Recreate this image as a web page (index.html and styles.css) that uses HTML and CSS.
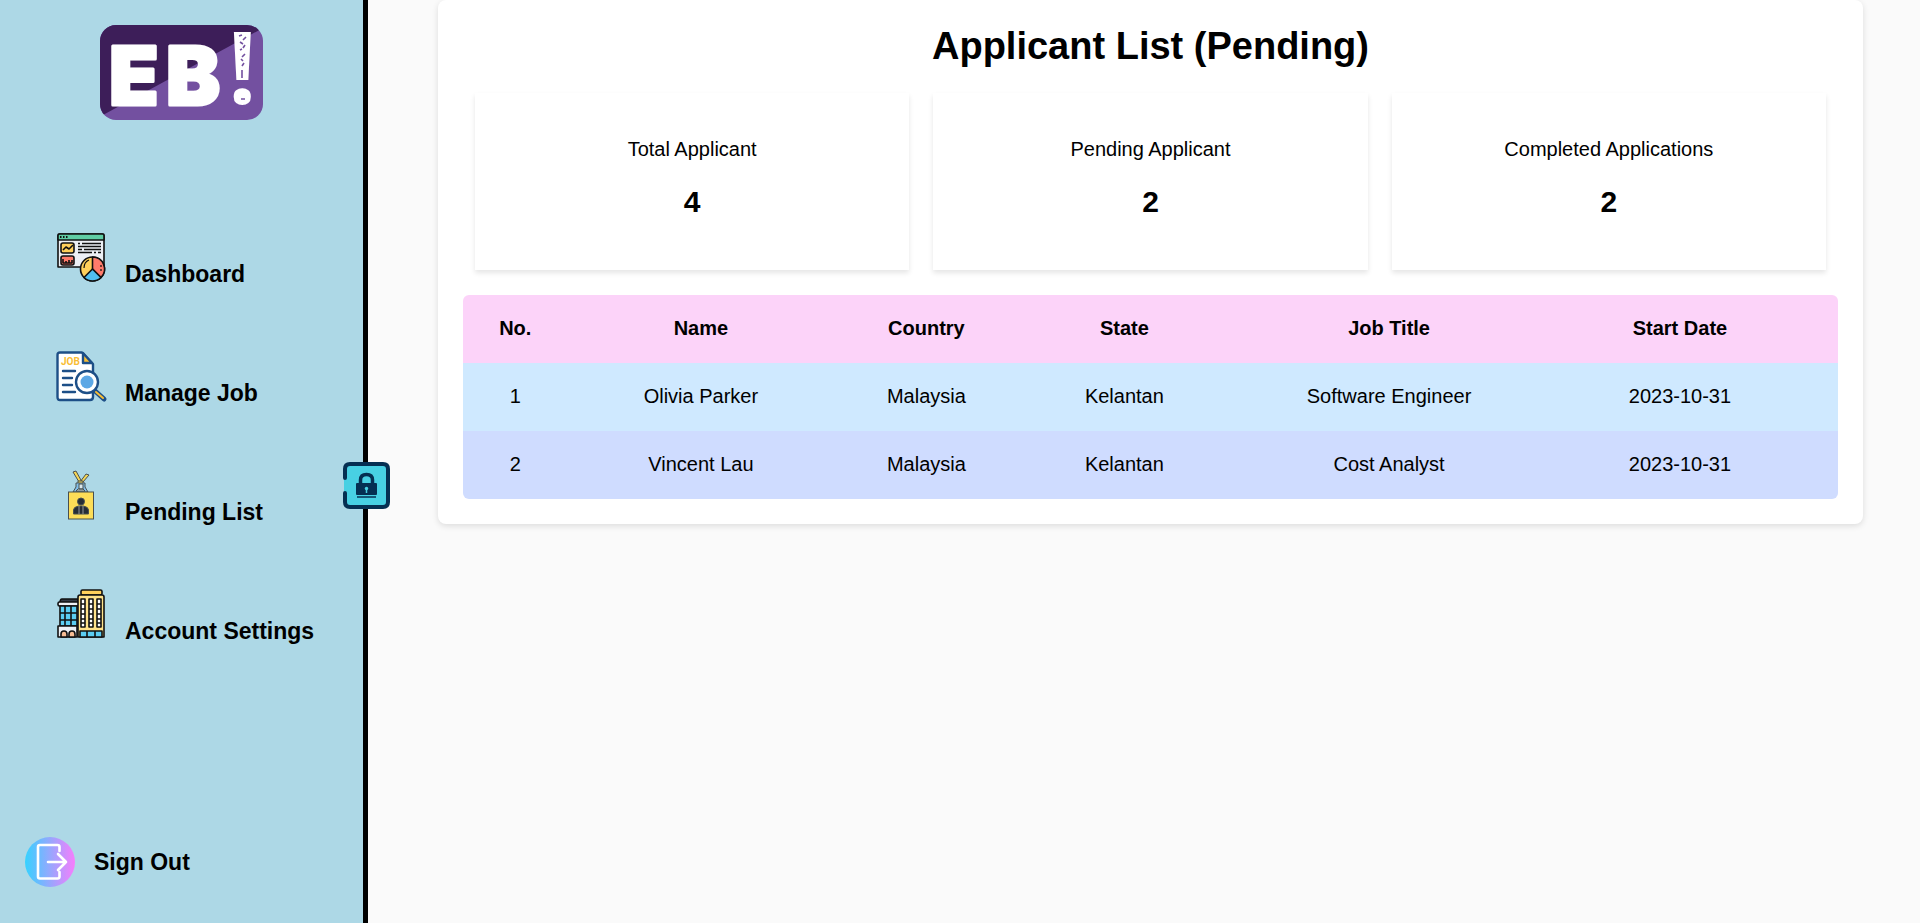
FILE: index.html
```html
<!DOCTYPE html>
<html lang="en">
<head>
<meta charset="utf-8">
<meta name="viewport" content="width=device-width, initial-scale=1">
<title>Applicant List (Pending)</title>
<link rel="stylesheet" href="styles.css">
</head>
<body>
<div class="page">
  <aside class="sidebar">
    <a class="logo" href="#" aria-label="EB home">
      <svg width="163" height="95" viewBox="0 0 163 95">
        <defs><clipPath id="logo-clip"><rect width="163" height="95" rx="16"/></clipPath></defs>
        <g clip-path="url(#logo-clip)">
          <rect width="163" height="95" fill="#7350a0"/>
          <path d="M0 0H163V3L3 90L0 91Z" fill="#3d1e59"/>
        </g>
        <g class="logo-letters">
          <text x="9" y="80" font-size="81">E</text>
          <text x="66" y="80" font-size="81">B</text>
        </g>
        <text class="logo-mark" x="128" y="79" font-size="100">!</text>
        <path d="M139 11l3-1M146 12l-3 3M140 17l3 2M145 20l-2 3M140 25l2-1M145 29l-3 3M141 34l2 2M144 38l-2 3M142 45v8M141 74h4" fill="none" stroke="#7350a0" stroke-width="1.6"/>
      </svg>
    </a>
    <nav class="nav">
      <a class="nav-link" href="#">
        <svg class="nav-icon" viewBox="0 0 50 50" stroke="#111" stroke-width="1.6" stroke-linejoin="round">
          <path d="M2 3.500Q2 2 3.500 2H46.500Q48 2 48 3.500V35H2Z" fill="#edf0f5"/>
          <path d="M2 3.500Q2 2 3.500 2H46.500Q48 2 48 3.500V8H2Z" fill="#5fcda4"/>
          <path d="M4 5h1.500M7 5h1.500M10 5h1.500" stroke-width="2"/>
          <rect x="5" y="11" width="13" height="10" rx="2" fill="#ffd05b"/>
          <rect x="5" y="24" width="13" height="9" rx="2" fill="#ff7b6b"/>
          <path d="M7 18l3-3 3 2 4-4M7 27v4h9v-3M10 31v-2M13 31v-3" fill="none"/>
          <path d="M22 11.500h2M26 11.500h19M22 14.500h23M22 17.500h4M28 17.500h17M22 20.500h14M38 20.500h2M42 20.500h3" stroke-width="1.400"/>
          <circle cx="36.500" cy="37" r="12" fill="#ffd05b"/>
          <path d="M36.500 25A12 12 0 0 1 45 45.500L36.500 37Z" fill="#ff7b6b"/>
          <path d="M45 45.500A12 12 0 0 1 28 45.500L36.500 37Z" fill="#50bff0"/>
          <path d="M28 36q0-6 5-8M45 33v2M45 37v2" fill="none" stroke-width="1.200"/>
        </svg>
        <span>Dashboard</span>
      </a>
      <a class="nav-link" href="#">
        <svg class="nav-icon" viewBox="0 0 50 50" stroke="#1d4f87" stroke-width="2.400" stroke-linejoin="round" stroke-linecap="round">
          <path d="M4 1.500H26L37 13V46Q37 49 34 49H4Q1.500 49 1.500 46V4Q1.500 1.500 4 1.500Z" fill="#fff"/>
          <path d="M27 2V12H36Z" fill="#f8bd35"/>
          <text class="job-tag" x="5" y="14" font-size="10">JOB</text>
          <path d="M7 20h12M7 27h9M7 34h9M7 41h12"/>
          <path d="M38 39l10 9" stroke-width="5"/>
          <path d="M40 41l7 6" stroke="#f8bd35" stroke-width="2"/>
          <circle cx="31" cy="31" r="11" fill="#fff"/>
          <circle cx="31" cy="31" r="6.500" fill="#5ba7e5" stroke="none"/>
        </svg>
        <span>Manage Job</span>
      </a>
      <a class="nav-link" href="#">
        <svg class="nav-icon" viewBox="0 0 50 50" stroke="#49504f" stroke-width="1">
          <path d="M17 2l6 10h3L20 1zM30 4l-6 8h3l6-7z" fill="#f7d755"/>
          <path d="M22 11h5v4h-5z" fill="#f7d755"/>
          <path d="M20 13h9v4l3 5H17l3-5z" fill="#83bfea"/>
          <path d="M23 14h4v5h-4zM22 19l-2 2h9l-2-2z" fill="#d9e8ed"/>
          <rect x="12.500" y="22" width="25" height="27" fill="#fddd57"/>
          <circle cx="25" cy="31.500" r="3.500" fill="#262d36"/>
          <path d="M17.500 44v-4q0-3 5-4h5q5 1 5 4v4z" fill="#262d36"/>
          <path d="M23 36v8M27 36v8" stroke="#94979a"/>
        </svg>
        <span>Pending List</span>
      </a>
      <a class="nav-link" href="#">
        <svg class="nav-icon" viewBox="0 0 50 50" stroke="#111" stroke-width="1.600" stroke-linejoin="round">
          <path d="M6 10h16v4H4q0-4 2-4z" fill="#333a44"/>
          <rect x="2" y="13" width="21" height="4" rx="1.500" fill="#edf0f5"/>
          <path d="M4 17h17v20H4z" fill="#5bcdf2"/>
          <path d="M9 17v20M15 17v20M4 24h17M4 31h17" fill="none"/>
          <path d="M2 37h19v11H2z" fill="#edf0f5"/>
          <path d="M5 48v-3q0-3 3-3t3 3v3zM13 48v-3q0-3 3-3t3 3v3z" fill="#f7bd94"/>
          <rect x="25" y="1" width="21" height="5" rx="1.500" fill="#ffd05b"/>
          <path d="M22 48V8q0-2 2-2h22q2 0 2 2v40z" fill="#ffe28a"/>
          <path d="M24 42h22v6H24z" fill="#5bcdf2"/>
          <path d="M31 42v6M39 42v6" fill="none"/>
          <path d="M25 10h4v28h-4zM33 10h4v28h-4zM41 10h4v28h-4z" fill="#fff"/>
          <path d="M25 15h4M25 20h4M25 25h4M25 30h4M25 34h4M33 15h4M33 20h4M33 25h4M33 30h4M33 34h4M41 15h4M41 20h4M41 25h4M41 30h4M41 34h4" fill="none"/>
        </svg>
        <span>Account Settings</span>
      </a>
    </nav>
    <a class="sign-out" href="#">
      <svg width="50" height="50" viewBox="0 0 50 50">
        <defs><linearGradient id="exit-fill"><stop offset="0" stop-color="#35d2ff"/><stop offset="1" stop-color="#f77dfc"/></linearGradient></defs>
        <circle cx="25" cy="25" r="25" fill="url(#exit-fill)"/>
        <path d="M34.500 14V10Q34.500 8 32.500 8H15Q13 8 13 10V39.500Q13 41.500 15 41.500H32.500Q34.500 41.500 34.500 39.500V35M23 25H41M33 17L41 25L33 33" fill="none" stroke="#fff" stroke-width="2.600" stroke-linecap="round" stroke-linejoin="round"/>
      </svg>
      <span>Sign Out</span>
    </a>
    <button class="lock" type="button" aria-label="Lock sidebar">
      <svg width="48" height="48" viewBox="0 0 48 48">
        <rect x="2" y="1" width="45" height="45" rx="6" fill="#48d0e3"/>
        <path d="M3 16V7Q3 2 8 2H41Q46 2 46 7V40Q46 45 41 45H8Q3 45 3 40V31" fill="none" stroke="#052f52" stroke-width="4" stroke-linecap="round"/>
        <path d="M18.500 23V18Q18.500 12.500 24.500 12.500T30.500 18V23" fill="none" stroke="#052f52" stroke-width="3.500"/>
        <rect x="14" y="21" width="21" height="12" rx="1" fill="#052f52"/>
        <path d="M15 35H34" stroke="#052f52" stroke-width="1.500"/>
        <path d="M24.500 25.500V31" stroke="#48d0e3" stroke-width="1.500"/><circle cx="24.500" cy="26.500" r="1.700" fill="#48d0e3"/>
      </svg>
    </button>
  </aside>
  <main class="content">
    <section class="panel">
      <h1 class="title">Applicant List (Pending)</h1>
      <div class="stats">
        <div class="stat"><p class="stat-label">Total Applicant</p><p class="stat-value">4</p></div>
        <div class="stat"><p class="stat-label">Pending Applicant</p><p class="stat-value">2</p></div>
        <div class="stat"><p class="stat-label">Completed Applications</p><p class="stat-value">2</p></div>
      </div>
      <table class="applicants">
        <colgroup><col class="col-no"><col class="col-name"><col class="col-country"><col class="col-state"><col class="col-job"><col></colgroup>
        <thead>
          <tr><th scope="col">No.</th><th scope="col">Name</th><th scope="col">Country</th><th scope="col">State</th><th scope="col">Job Title</th><th scope="col">Start Date</th></tr>
        </thead>
        <tbody>
          <tr><td>1</td><td>Olivia Parker</td><td>Malaysia</td><td>Kelantan</td><td>Software Engineer</td><td>2023-10-31</td></tr>
          <tr><td>2</td><td>Vincent Lau</td><td>Malaysia</td><td>Kelantan</td><td>Cost Analyst</td><td>2023-10-31</td></tr>
        </tbody>
      </table>
    </section>
  </main>
</div>
</body>
</html>
```
FILE: styles.css
```css
* { box-sizing: border-box; }
body {
  margin: 0;
  background: #fafafa;
  color: #000;
  font-family: "Liberation Sans", Arial, sans-serif;
  font-size: 20px;
}
svg { display: block; flex: none; overflow: visible; }
p, h1 { margin: 0; }
.page { display: flex; min-height: 100vh; }

.sidebar {
  position: relative;
  flex: none;
  display: flex;
  flex-direction: column;
  width: 368px;
  padding: 25px 0 36px;
  background: #add8e6;
  border-right: 5px solid #000;
}
.logo { align-self: center; }
.logo-letters {
  fill: #fff;
  stroke: #fff;
  stroke-width: 3px;
  stroke-linejoin: round;
  font-family: Inter, "Liberation Sans", sans-serif;
  font-weight: 900;
}
.logo-mark {
  fill: #fff;
  font-family: "Open Sans", "Liberation Sans", sans-serif;
  font-weight: 700;
}
.nav {
  display: flex;
  flex-direction: column;
  gap: 69px;
  padding: 112px 0 0 56px;
}
.nav-link {
  display: flex;
  align-items: flex-end;
  gap: 19px;
  height: 50px;
  color: #000;
  font-size: 23px;
  font-weight: 700;
  line-height: 16px;
  text-decoration: none;
}
.nav-icon { width: 50px; height: 50px; }
.job-tag {
  fill: #f8bd35;
  stroke: none;
  font-family: Roboto, "Liberation Sans", sans-serif;
  font-weight: 700;
}
.sign-out {
  display: flex;
  align-items: center;
  gap: 19px;
  margin-top: auto;
  padding-left: 25px;
  color: #000;
  font-size: 23px;
  font-weight: 700;
  text-decoration: none;
}
.lock {
  position: absolute;
  top: 50%;
  right: -27px;
  padding: 0;
  border: 0;
  background: none;
  cursor: pointer;
}

.content { flex: 1; min-width: 0; padding: 0 57px 0 70px; }
.panel {
  padding: 25px;
  background: #fff;
  border-radius: 8px;
  box-shadow: 0 2px 6px rgba(0, 0, 0, 0.12);
}
.title { font-size: 38px; line-height: 42px; text-align: center; }
.stats {
  display: grid;
  grid-template-columns: repeat(3, 1fr);
  gap: 24px;
  padding: 26px 12px 25px;
}
.stat {
  padding: 44px 20px 51px;
  text-align: center;
  box-shadow: 0 3px 5px rgba(0, 0, 0, 0.1);
}
.stat-label { line-height: 24px; }
.stat-value { margin-top: 24px; font-size: 30px; font-weight: 700; line-height: 34px; }

.applicants {
  width: 100%;
  table-layout: fixed;
  border-collapse: collapse;
  border-radius: 6px;
  overflow: hidden;
  text-align: center;
}
.applicants th, .applicants td { padding: 21px 0 23px; line-height: 24px; }
.applicants th:last-child, .applicants td:last-child { padding-right: 26px; }
.applicants thead { background: #fcd3f9; }
.applicants tbody tr { background: #cfe9ff; }
.applicants tbody tr:nth-child(even) { background: #cfdcff; }
.col-no { width: 7.6%; }
.col-name { width: 19.4%; }
.col-country { width: 13.4%; }
.col-state { width: 15.4%; }
.col-job { width: 23.1%; }
```
